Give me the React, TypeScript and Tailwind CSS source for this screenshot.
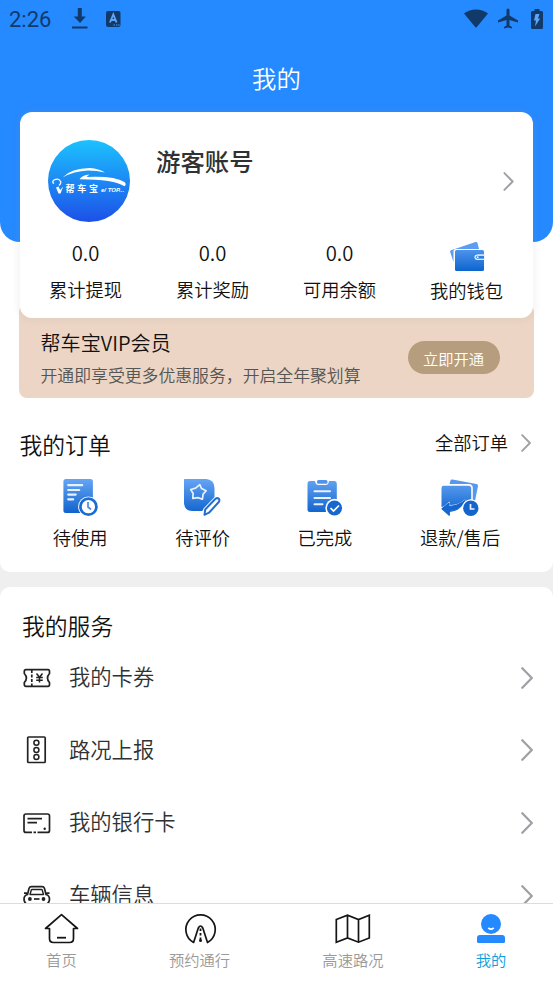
import type { ReactNode } from "react";

function Arrow({ className }: { className: string }) {
    return (
        <svg viewBox="0 0 12 22" fill="none" stroke="#a0a0a6" strokeLinecap="round" strokeLinejoin="round" className={className}>
            <path d="M1.300 1.300L10.800 11L1.300 20.700" strokeWidth="2.300" />
        </svg>
    );
}

function StatusBar() {
    return (
        <div className="flex h-[37px] items-center justify-between pl-[9px] pr-[9px] text-[#113a6b]">
            <div className="flex items-center">
                <span className="w-[63px] pt-[2px] font-[Roboto] text-[22px] font-[450] leading-[37px]">2:26</span>
                <svg viewBox="0 0 16 21" fill="currentColor" className="h-[21px] w-4">
                    <path d="M5.800 0h4v8.500h4L8 15 1.800 8.500h4zM0 18.500h15.500v2H0z" />
                </svg>
                <svg viewBox="0 0 15 16" className="ml-[18px] h-4 w-[15px]">
                    <rect width="14.500" height="16" rx="2" fill="currentColor" />
                    <path d="M4 11.500L7.300 3.500L10.600 11.500M5.300 9h4" fill="none" stroke="#5fa6f7" strokeWidth="1.900" />
                    <path d="M7.500 14h1.300M10 14h1.300M12.200 14h1.300" stroke="#5fa6f7" strokeWidth="1" />
                </svg>
            </div>
            <div className="flex items-center">
                <svg viewBox="0 0 24 19" fill="currentColor" className="mr-[1px] h-[19px] w-6">
                    <path d="M0 4.500C7 -.9 17 -.9 24 4.500L12.600 18.200Q12 18.800 11.400 18.200Z" />
                </svg>
                <svg viewBox="2 2 20 20" fill="currentColor" className="ml-[9px] h-[21px] w-[20px]">
                    <path d="M22 16v-2l-8.500-5V3.500a1.500 1.500 0 0 0-3 0V9L2 14v2l8.500-2.500V19L8 20.500V22l4-1 4 1v-1.500L13.500 19v-5.500z" />
                </svg>
                <svg viewBox="0 0 12 20" className="ml-[13px] mr-[1px] h-5 w-3">
                    <path d="M1.500 2H3.500V0h5v2h2Q12 2 12 3.500v15Q12 20 10.500 20h-9Q0 20 0 18.500v-15Q0 2 1.500 2z" fill="currentColor" />
                    <path d="M4.500 5H8.500L7 9.500H9.200L4 17.500L5 11.500H3z" fill="#5fa6f7" />
                </svg>
            </div>
        </div>
    );
}

function Avatar() {
    return (
        <svg viewBox="0 0 82 82" className="h-[82px] w-[82px]">
            <defs>
                <linearGradient id="avatar" x1="0" y1="0" x2="0" y2="1">
                    <stop offset="0" stopColor="#1cc2ff" />
                    <stop offset="1" stopColor="#1c50e8" />
                </linearGradient>
            </defs>
            <circle cx="41" cy="41" r="41" fill="url(#avatar)" />
            <g fill="#fff">
                <path d="M14.500 37.500Q23 28.200 42 28Q51 28.600 57 32.500Q49 30.500 40 30.500Q26 31 14.500 37.500z" />
                <path d="M31.500 39.300Q34 35 41.500 34.500L38.500 36.900Q66 35.500 76.500 42Q79 44.500 76.500 46.300Q66 39.500 31.500 39.300z" />
                <path d="M8 47.500L10.500 46.500L12.200 50L15.200 46.500L12.500 53.500L10.500 53.500z" />
            </g>
            <path d="M6 43.500Q3.500 42 6 40Q11 37.500 12.800 42Q13 44 11 45.500" fill="none" stroke="#fff" strokeWidth="1.300" />
            <text x="17.500" y="52.300" fill="#fff" fontSize="9" fontWeight="700" letterSpacing="2.700" fontFamily="Noto Sans CJK SC, sans-serif">帮车宝</text>
            <text x="53" y="52.300" fill="#fff" fontSize="6" fontStyle="italic" fontWeight="700" fontFamily="Liberation Sans, sans-serif">e/ TOP...</text>
        </svg>
    );
}

function BlueGradient() {
    return (
        <defs>
            <linearGradient id="blue" gradientUnits="userSpaceOnUse" x1="0" y1="2" x2="0" y2="38">
                <stop offset="0" stopColor="#65a5f5" />
                <stop offset="1" stopColor="#0b5fca" />
            </linearGradient>
        </defs>
    );
}

function WalletIcon() {
    return (
        <svg viewBox="0 0 36 31" className="h-[31px] w-9">
            <defs>
                <linearGradient id="wallet" x1="0" y1="0" x2="0" y2="1">
                    <stop offset="0" stopColor="#4d93ec" />
                    <stop offset="1" stopColor="#0d64cd" />
                </linearGradient>
            </defs>
            <path d="M2 9.200L26.500 1Q28 .5 28.500 2L30 8H7Q4.500 8 4.500 10.500V21L1.200 11Q.8 9.600 2 9.200z" fill="#5c9df1" />
            <path d="M7.500 9H33.500Q35 9 35 10.500V13.600H28.500Q25.500 13.800 25.500 16.200Q25.500 18.700 28.500 18.900H35V28.500Q35 30 33.500 30H7.500Q6 30 6 28.500V10.500Q6 9 7.500 9z" fill="url(#wallet)" />
            <path d="M28.500 14.300H35.500V18.200H28.500Q26.300 18 26.300 16.200Q26.300 14.400 28.500 14.300z" fill="#2f7fdf" stroke="#e8f1fd" strokeWidth="1" />
            <circle cx="28.700" cy="16.200" r=".9" fill="#fff" />
        </svg>
    );
}

function PendingIcon() {
    return (
        <svg viewBox="-.7 0 40 40" className="h-10 w-10">
            <BlueGradient />
            <rect x="2.700" y="2" width="29.500" height="34" rx="2.500" fill="url(#blue)" />
            <path d="M7.500 8.200H21.500M7.500 13H18.500M7.500 17.600H15M7.500 22.300H12.500" stroke="#e8f2ff" strokeWidth="2.200" strokeLinecap="round" />
            <circle cx="27.700" cy="29.700" r="10.300" fill="#fff" />
            <circle cx="27.700" cy="29.700" r="8" fill="#fff" stroke="#1b6bd2" strokeWidth="2.700" />
            <path d="M27.300 25V30L30.300 32.500" stroke="#4b8be0" strokeWidth="1.700" fill="none" />
        </svg>
    );
}

function ReviewIcon() {
    return (
        <svg viewBox="1.500 0 40 40" className="h-10 w-10">
            <path d="M3 2H25Q33 3 33 11V22L20.500 34H11Q3 34 2.500 26V2.500z" fill="url(#blue)" />
            <path d="M17.500 7.500L19.700 11.300L24.500 13L21.800 16.700L21.700 21.800L17 20.700L12 22L11.800 17L9 13.300L13.700 11.500z" transform="rotate(6 17 15)" fill="none" stroke="#e8f2ff" strokeWidth="1.700" strokeLinejoin="round" />
            <path d="M23.500 32.500L34 21.500Q36 20 37.700 21.500Q39.200 23 38 25L28 36L22.700 38z" fill="#fff" stroke="#fff" strokeWidth="3.500" />
            <path d="M23.700 32.500L34 21.800Q35.700 20.500 37.300 21.700Q38.500 23.200 37.300 25L27.500 35.700L23 37.800z" fill="#fff" stroke="#246fcd" strokeWidth="2" strokeLinejoin="round" />
        </svg>
    );
}

function DoneIcon() {
    return (
        <svg viewBox=".5 0 40 40" className="h-10 w-10">
            <path d="M5 4H10.500Q11 8 14 8H21Q24 8 24.500 4H30Q32.300 4 32.300 6.500V35H5.500Q3 35 3 32.500V6.500Q3 4 5 4z" fill="url(#blue)" />
            <rect x="12.500" y="3" width="10.500" height="3.800" rx="1.500" fill="#4e94ef" />
            <path d="M10 14.300H25.500M10 21H25.500M10 27.300H18" stroke="#e8f2ff" strokeWidth="2" strokeLinecap="round" />
            <circle cx="30" cy="31" r="9.200" fill="#fff" />
            <circle cx="30" cy="31" r="7.600" fill="#1767d1" />
            <path d="M26 31L29 34L34.500 28.500" stroke="#fff" strokeWidth="1.700" fill="none" />
        </svg>
    );
}

function RefundIcon() {
    return (
        <svg viewBox=".5 0 40 40" className="h-10 w-10">
            <path d="M10 7L11 3.500Q11.500 2.200 13 2.500L37 7Q38.800 7.500 38.500 9L35.500 24L33.300 23V11Q33.300 7 29 7z" fill="#5598ed" />
            <path d="M4 8.700H29Q31.700 8.700 31.700 11.500V22Q27 25 24 25Q18 29 10 28L2 30V11Q2 8.700 4 8.700z" fill="url(#blue)" />
            <path d="M1.500 31.500L10 24.500V28Q19 28 25.500 22.500L26.500 24Q22 35 10.500 35.500V40L1.500 32z" fill="#fff" />
            <path d="M2.500 31.800L9.300 26.300V29.300Q18 29.500 25.500 23.500Q20 34 9.800 34.300V38.200z" fill="#1566cf" stroke="#1566cf" strokeWidth="1.200" strokeLinejoin="round" />
            <circle cx="31.300" cy="31.300" r="9" fill="#fff" />
            <circle cx="31.300" cy="31.300" r="7.700" fill="#1464cc" />
            <path d="M31 27V32H35" stroke="#e8f2ff" strokeWidth="1.700" fill="none" />
        </svg>
    );
}

function LineIcon({ children }: { children: ReactNode }) {
    return (
        <svg viewBox="0 0 28 28" fill="none" stroke="#222" strokeWidth="1.700" strokeLinejoin="round" className="mt-[1px] h-7 w-7">
            {children}
        </svg>
    );
}

const stats = [
    { label: "累计提现", value: "0.0" },
    { label: "累计奖励", value: "0.0" },
    { label: "可用余额", value: "0.0" },
];

const orders = [
    { label: "待使用", icon: <PendingIcon /> },
    { label: "待评价", icon: <ReviewIcon /> },
    { label: "已完成", icon: <DoneIcon /> },
    { label: "退款/售后", icon: <RefundIcon /> },
];

const services = [
    {
        label: "我的卡券",
        icon: (
            <LineIcon>
                <path d="M3 5.700H25Q26.500 5.700 26.500 7.500V9.500Q22.500 14 26.500 18.500V20.500Q26.500 22.300 25 22.300H3Q1.300 22.300 1.300 20.500V18.500Q5.500 14 1.300 9.500V7.500Q1.300 5.700 3 5.700z" />
                <path d="M8.800 6V22" strokeDasharray="3 1.500" />
                <path d="M13.500 9.500L16.500 13.300L19.500 9.500M13.200 13.500H19.800M13.200 16.200H19.800M16.500 13.500V18.500" strokeWidth="1.500" />
            </LineIcon>
        ),
    },
    {
        label: "路况上报",
        icon: (
            <LineIcon>
                <rect x="4.700" y="1" width="17.500" height="25.500" rx="1" />
                <circle cx="13.400" cy="6.700" r="2.500" strokeWidth="1.500" />
                <circle cx="13.400" cy="13.900" r="2.500" strokeWidth="1.500" />
                <circle cx="13.400" cy="21.100" r="2.500" strokeWidth="1.500" />
            </LineIcon>
        ),
    },
    {
        label: "我的银行卡",
        icon: (
            <LineIcon>
                <path d="M9 23.400H3Q1 23.400 1 21.400V7Q1 5 3 5H24.500Q26.500 5 26.500 7V21.400Q26.500 23.400 24.500 23.400H14.500M10.500 23.400H13" />
                <path d="M4.500 9.700H19M4.500 13.700H14" />
                <circle cx="21.700" cy="19.800" r="1.200" fill="#222" stroke="none" />
            </LineIcon>
        ),
    },
    {
        label: "车辆信息",
        icon: (
            <LineIcon>
                <path d="M4.500 12.500L6 6.500Q6.500 4.700 8.500 4.700H19Q21 4.700 21.500 6.500L23 12.500Q26.500 13.500 26.500 17Q26.500 20.500 24 22H3.500Q1 20.500 1 17Q1 13.500 4.500 12.500zM1 11.200H4M23.500 11.200H26.500" />
                <path d="M7 12.500L8.300 8Q8.500 7.500 9 7.500H18.500Q19 7.500 19.200 8L20.500 12.500z" strokeWidth="1.400" />
                <path d="M11 17H16.500" />
                <circle cx="6.900" cy="17" r="1.900" fill="#222" stroke="none" />
                <circle cx="20.500" cy="17" r="1.900" fill="#222" stroke="none" />
            </LineIcon>
        ),
    },
];

const tabs = [
    {
        label: "首页",
        icon: (
            <svg viewBox="-1 0 36 32" fill="none" stroke="#151515" strokeWidth="1.700" strokeLinejoin="round" className="h-8 w-9">
                <path d="M17.500 1.600L1.500 15.500H5.500V25.500Q5.500 29.500 9.500 29.500H25.500Q29.500 29.500 29.500 25.500V15.500H33.500z" />
                <path d="M13 24.700H22" strokeWidth="1.800" />
            </svg>
        ),
    },
    {
        label: "预约通行",
        icon: (
            <svg viewBox="-.3 0 36 32" fill="none" stroke="#151515" strokeWidth="1.700" strokeLinejoin="round" className="h-8 w-9">
                <path d="M11.300 29.500A14.700 14.700 0 1 1 25.200 29.500L20.500 15Q18.200 11 16 15z" />
                <path d="M18.200 15.500V29" strokeWidth="1.800" strokeDasharray="2.500 2" />
                <circle cx="18.200" cy="27.500" r="1.500" fill="#151515" stroke="none" />
            </svg>
        ),
    },
    {
        label: "高速路况",
        icon: (
            <svg viewBox="0 0 36 32" fill="none" stroke="#151515" strokeWidth="1.700" className="h-8 w-9">
                <path d="M1.300 6.500L12.500 2.200L23.500 6.500L34.300 2.200V25L23.500 29.200L12.500 25L1.300 29.200zM12.500 2.200V25M23.500 6.500V29.200" />
            </svg>
        ),
    },
    {
        label: "我的",
        active: true,
        icon: (
            <svg viewBox="0 0 36 32" fill="#2589ff" className="h-8 w-9">
                <circle cx="18" cy="11" r="10" />
                <path d="M7 22H29Q32 22 32 25V28.500Q32 30 30.500 30H5.500Q4 30 4 28.500V25Q4 22 7 22z" />
                <path d="M15.300 14.800Q18 17.500 20.700 14.800" fill="none" stroke="#fff" strokeWidth="1.700" />
            </svg>
        ),
    },
];

export default function App() {
    return (
        <div className="flex h-[983px] w-[553px] flex-col overflow-hidden bg-white font-['Noto_Sans_CJK_SC',sans-serif] font-[350] text-[#111]">
            <main className="min-h-0 flex-1 overflow-hidden bg-[#efefef]">
                <section className="h-[572px] rounded-b-[10px] bg-white">
                    <header className="h-[241.500px] rounded-b-[20px] bg-[#2589ff]">
                        <StatusBar />
                        <h1 className="pt-[23px] text-center text-[24.4px] leading-[36px] text-white">我的</h1>
                    </header>

                    {/* account */}
                    <div className="relative mx-5 -mt-[129.500px] h-[206px] rounded-[12px] bg-white shadow-[0_0_4px_4px_rgba(150,150,150,0.08)]">
                        <div className="flex h-[110px] pl-7 pt-7">
                            <Avatar />
                            <h2 className="ml-[26px] flex-1 pt-[3px] text-[24.4px] font-medium leading-[36px] text-[#303133]">游客账号</h2>
                            <Arrow className="mr-[19px] mt-[32px] h-[19px] w-[11px]" />
                        </div>
                        <div className="ml-[2px] grid w-[508px] grid-cols-4 text-center text-[18.3px]">
                            {stats.map((item) => (
                                <div key={item.label} className="pt-[16px]">
                                    <p className="text-[20.3px] leading-[28px]">{item.value}</p>
                                    <p className="mt-[9px] leading-[28px]">{item.label}</p>
                                </div>
                            ))}
                            <div className="flex flex-col items-center pt-[19px]">
                                <WalletIcon />
                                <p className="mt-[4px] leading-[28px]">我的钱包</p>
                            </div>
                        </div>
                    </div>

                    {/* vip */}
                    <div className="mx-[19px] -mt-[14px] flex h-[94px] items-start rounded-[8px] bg-[#ecd5c4] pl-[21.500px] pt-[25px]">
                        <div className="w-[367px]">
                            <h3 className="text-[20.1px] leading-[28px]">帮车宝VIP会员</h3>
                            <p className="mt-[5px] whitespace-nowrap text-[16.85px] leading-[26px] text-[#555]">开通即享受更多优惠服务，开启全年聚划算</p>
                        </div>
                        <button className="mt-[12px] h-[33px] w-[92px] rounded-full bg-[#b69d7e] text-[15.3px] leading-[32px] text-white">立即开通</button>
                    </div>

                    {/* orders */}
                    <div className="flex items-start justify-between pl-[19.500px] pr-[22px] pt-[27px]">
                        <h3 className="text-[22.8px] leading-[40px]">我的订单</h3>
                        <a className="flex items-center gap-[13px] text-[18.3px] leading-[35px]">
                            全部订单 <Arrow className="h-[18px] w-[10px]" />
                        </a>
                    </div>
                    <div className="flex justify-around px-[19px] pt-[12px]">
                        {orders.map((item) => (
                            <div key={item.label} className="flex flex-col items-center text-[18.3px] leading-[28px]">
                                {item.icon}
                                <p className="mt-[6px]">{item.label}</p>
                            </div>
                        ))}
                    </div>
                </section>

                <section className="mt-[15px] rounded-t-[10px] bg-white">
                    <h3 className="h-[54px] pl-[22px] pt-[19px] text-[22.8px] leading-[40px]">我的服务</h3>
                    {services.map((item) => (
                        <div key={item.label} className="flex h-[72.6px] items-center pl-[23px] pr-[20px]">
                            {item.icon}
                            <span className="-mt-[2px] ml-[18px] flex-1 text-[21.3px] leading-[32px] text-[#303133]">{item.label}</span>
                            <Arrow className="mt-[1px] h-[22px] w-3" />
                        </div>
                    ))}
                </section>
            </main>

            <nav className="flex h-[80px] shrink-0 justify-around border-t border-[#dcdcdc] bg-white pr-[.5px] pt-[9px] text-[15.3px]">
                {tabs.map((tab) => (
                    <a key={tab.label} className="flex flex-col items-center">
                        <span className="-mx-3">{tab.icon}</span>
                        <span className={tab.active ? "mt-[2px] leading-[24px] text-[#0aa0e0]" : "mt-[2px] leading-[24px] text-[#999]"}>{tab.label}</span>
                    </a>
                ))}
            </nav>
        </div>
    );
}
